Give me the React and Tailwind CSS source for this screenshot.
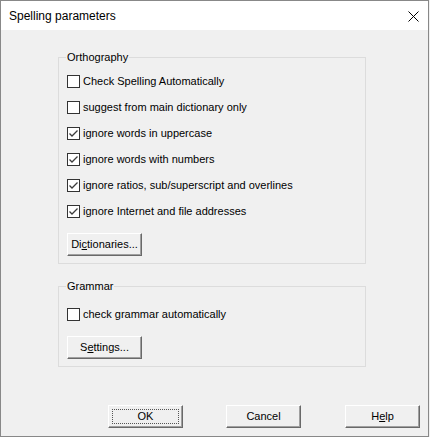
import React from "react";

const font = { fontFamily: '"Liberation Sans", Arial, sans-serif' };

function Check({ checked, label }) {
  return (
    <div className="flex h-[26px] items-center">
      <div className="flex h-[13px] w-[13px] shrink-0 items-center justify-center border border-[#333333] bg-white">
        {checked && (
          <svg width="11" height="11" viewBox="0 0 11 11">
            <polyline points="1.5,5.5 4,8 9.5,2.5" fill="none" stroke="#3c3c3c" strokeWidth="1.3" />
          </svg>
        )}
      </div>
      <span className="ml-[3px] text-[11px] leading-[13px] text-black">{label}</span>
    </div>
  );
}

function Button({ children, focused }) {
  return (
    <button className="relative flex h-[23px] w-[75px] items-center justify-center border border-t-white border-l-white border-b-[#696969] border-r-[#696969] bg-[#f0f0f0] text-[11px] leading-[13px] text-black shadow-[inset_-1px_-1px_0_#a0a0a0]">
      {focused && (
        <span className="absolute inset-[3px] border border-dotted border-[#555555]" />
      )}
      <span className="relative">{children}</span>
    </button>
  );
}

export default function App() {
  return (
    <div className="h-[437px] w-[430px] bg-[#f0f0f0]" style={font}>
      <div className="flex h-[437px] w-[429px] flex-col border border-[#888888] bg-[#f0f0f0]">
        <div className="flex h-[29px] shrink-0 items-center justify-between bg-white pl-[8px] pr-[9px]">
          <span className="text-[12px] leading-[14px] text-black">Spelling parameters</span>
          <svg width="11" height="11" viewBox="0 0 11 11" className="mt-[1px]">
            <path d="M0.5 0.5 L10.5 10.5 M10.5 0.5 L0.5 10.5" stroke="#000" strokeWidth="1" fill="none" />
          </svg>
        </div>
        <div className="flex flex-1 flex-col pl-[57px] pt-[21px]">
          <fieldset className="w-[308px] border border-[#dcdcdc] pb-[7px] pl-[8px] pt-[4px]">
            <legend className="-ml-[1px] px-[1px] text-[11px] leading-[13px] text-black">Orthography</legend>
            <Check label="Check Spelling Automatically" />
            <Check label="suggest from main dictionary only" />
            <Check checked label="ignore words in uppercase" />
            <Check checked label="ignore words with numbers" />
            <Check checked label="ignore ratios, sub/superscript and overlines" />
            <Check checked label="ignore Internet and file addresses" />
            <div className="mt-[9px]">
              <Button>
                Di<span className="underline">c</span>tionaries...
              </Button>
            </div>
          </fieldset>
          <fieldset className="mt-[16px] w-[308px] border border-[#dcdcdc] pb-[7px] pl-[8px] pt-[8px]">
            <legend className="-ml-[1px] px-[1px] text-[11px] leading-[13px] text-black">Grammar</legend>
            <Check label="check grammar automatically" />
            <div className="mt-[9px]">
              <Button>
                S<span className="underline">e</span>ttings...
              </Button>
            </div>
          </fieldset>
        </div>
        <div className="flex justify-end pb-[8px] pr-[8px]">
          <Button focused>OK</Button>
          <div className="w-[43px]" />
          <Button>Cancel</Button>
          <div className="w-[44px]" />
          <Button>
            H<span className="underline">e</span>lp
          </Button>
        </div>
      </div>
    </div>
  );
}
